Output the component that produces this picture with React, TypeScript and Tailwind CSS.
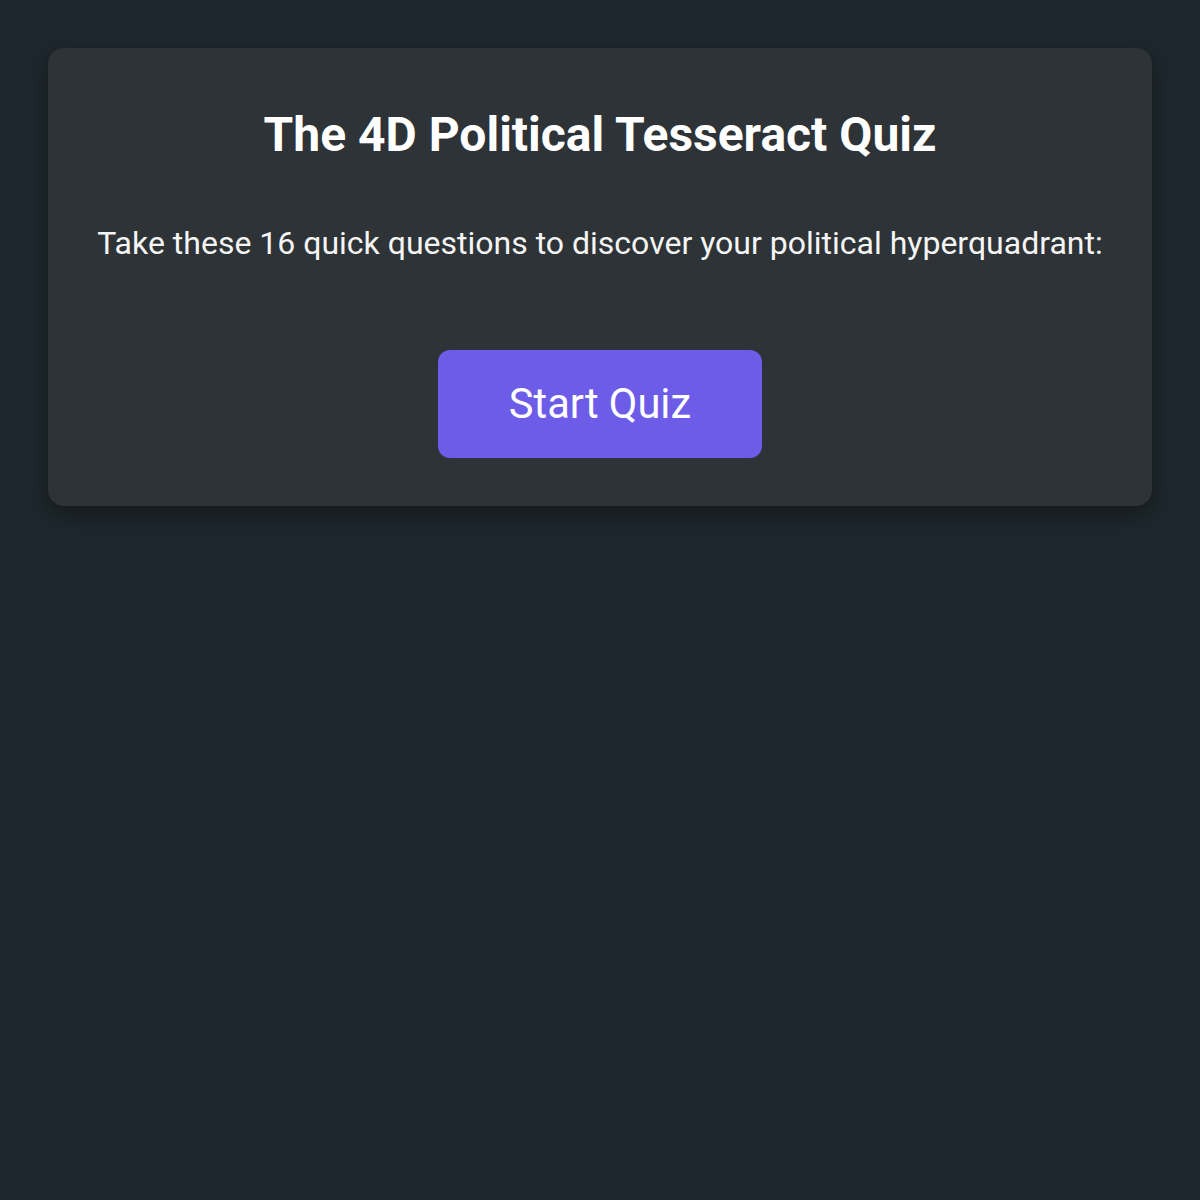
import React from "react";

export default function App() {
  return (
    <div className="min-h-[1200px] w-full bg-[#1e272d] p-[48px]" style={{ fontFamily: "Roboto, 'Noto Sans', sans-serif" }}>
      <div className="flex flex-col items-center rounded-[16px] bg-[#2d3336] pt-[59px] pb-[48px] shadow-[0_8px_24px_rgba(0,0,0,0.35)]">
        <h1 className="text-[48px] font-bold leading-[56px] text-white">The 4D Political Tesseract Quiz</h1>
        <p className="mt-[60px] text-[32px] leading-[40px] text-[#f5f5f5]">
          Take these 16 quick questions to discover your political hyperquadrant:
        </p>
        <button className="mt-[87px] flex h-[108px] w-[324px] items-center justify-center rounded-[12px] bg-[#6c5ce7] text-[41.6px] text-white">
          Start Quiz
        </button>
      </div>
    </div>
  );
}
